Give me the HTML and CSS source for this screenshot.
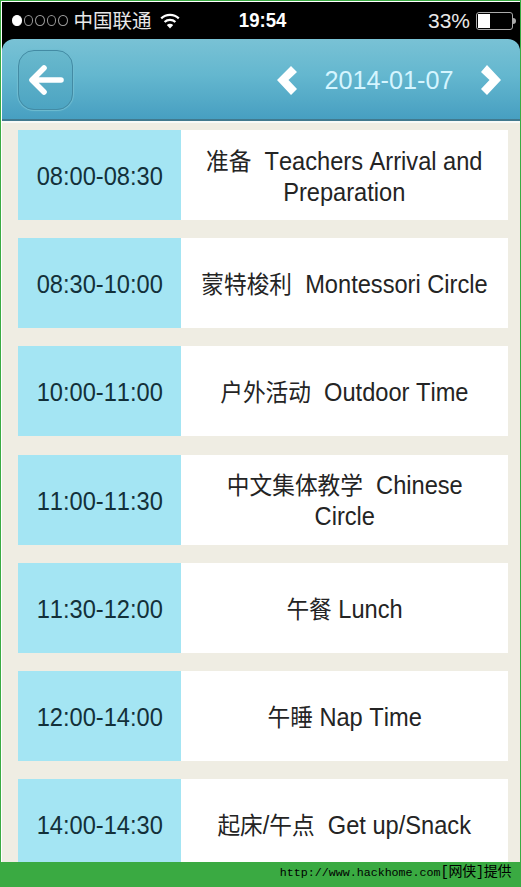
FILE: index.html
```html
<!DOCTYPE html>
<html lang="zh-CN">
<head>
    <meta charset="UTF-8">
    <meta name="viewport" content="width=device-width, initial-scale=1.0">
    <link rel="stylesheet" href="styles.css">
    <title>Schedule</title>
</head>
<body>
    <div class="wrapper">
        <div class="phone">
            <div class="status">
                <div class="status-left">
                    <div class="signal"><i class="full"></i><i></i><i></i><i></i><i></i></div>
                    <span class="carrier">中国联通</span>
                    <svg class="wifi" width="20" height="16" viewBox="0 0 20 16">
                        <path d="M1.2 5.4a12.6 12.6 0 0 1 17.6 0M4.6 9a7.8 7.8 0 0 1 10.8 0" fill="none" stroke="#fff" stroke-width="2.2"/>
                        <path d="M10 15.4l-3.2-3.4a5 5 0 0 1 6.4 0z" fill="#fff"/>
                    </svg>
                </div>
                <span class="clock">19:54</span>
                <div class="status-right">
                    <span class="percent">33%</span>
                    <div class="battery"><div class="level"></div></div>
                    <div class="battery-tip"></div>
                </div>
            </div>
            <div class="header-back">
                <div class="header">
                    <button class="back">
                        <svg width="36" height="32" viewBox="0 0 36 32">
                            <path d="M16 4L4 16l12 12M4.500 16H33" fill="none" stroke="#fff" stroke-width="5.600" stroke-linecap="round" stroke-linejoin="round"/>
                        </svg>
                    </button>
                    <div class="dates">
                        <svg width="20" height="30" viewBox="0 0 20 30">
                            <path d="M14 1l6 6-8.500 8 8.500 9-6 6L0 15z" fill="#fff"/>
                        </svg>
                        <span class="date">2014-01-07</span>
                        <svg width="20" height="30" viewBox="0 0 20 30">
                            <path d="M6 0L20 15 6 30l-6-6 8.500-9L0 7z" fill="#fff"/>
                        </svg>
                    </div>
                </div>
            </div>
            <div class="list">
                <div class="item">
                    <div class="time"><span>08:00-08:30</span></div>
                    <div class="name"><span><b>准备</b>&nbsp; Teachers Arrival and<br>Preparation</span></div>
                </div>
                <div class="item">
                    <div class="time"><span>08:30-10:00</span></div>
                    <div class="name"><span><b>蒙特梭利</b>&nbsp; Montessori Circle</span></div>
                </div>
                <div class="item">
                    <div class="time"><span>10:00-11:00</span></div>
                    <div class="name"><span><b>户外活动</b>&nbsp; Outdoor Time</span></div>
                </div>
                <div class="item">
                    <div class="time"><span>11:00-11:30</span></div>
                    <div class="name"><span><b>中文集体教学</b>&nbsp; Chinese<br>Circle</span></div>
                </div>
                <div class="item">
                    <div class="time"><span>11:30-12:00</span></div>
                    <div class="name"><span><b>午餐</b> Lunch</span></div>
                </div>
                <div class="item">
                    <div class="time"><span>12:00-14:00</span></div>
                    <div class="name"><span><b>午睡</b> Nap Time</span></div>
                </div>
                <div class="item">
                    <div class="time"><span>14:00-14:30</span></div>
                    <div class="name"><span><b>起床</b>/<b>午点</b>&nbsp; Get up/Snack</span></div>
                </div>
            </div>
        </div>
        <div class="footer">http://www.hackhome.com<span>[网侠]提供</span></div>
    </div>
</body>
</html>
```
FILE: styles.css
```css
*{
    margin: 0;
    padding: 0;
    box-sizing: border-box;
}
body{
    font-family: "Liberation Sans", "Noto Sans CJK SC", sans-serif;
    font-kerning: none;
    background: #3aaa42;
}
.wrapper{
    height: 887px;
    display: flex;
    flex-direction: column;
    padding: 1px 1px 0;
    overflow: hidden;
}
.phone{
    height: 861px;
    display: flex;
    flex-direction: column;
    border-top: 1px solid #fff;
    border-left: 1px solid #fff;
    background: #efede3;
    overflow: hidden;
}

.status{
    height: 37px;
    flex-shrink: 0;
    display: grid;
    grid-template-columns: 1fr auto 1fr;
    align-items: center;
    padding: 0 4px 0 10px;
    background: #000;
    color: #e8e8e8;
}
.status-left, .status-right, .signal{
    display: flex;
    align-items: center;
}
.signal{
    gap: 2px;
}
.signal i{
    width: 9.500px;
    height: 11px;
    border: 1px solid #999;
    border-radius: 50%;
}
.signal .full{
    background: #fff;
    border-color: #fff;
}
.carrier{
    margin: 0 8px 0 6px;
    font-size: 19.500px;
    line-height: 30px;
}
.clock{
    margin-right: 3px;
    font-size: 20px;
    font-weight: bold;
    color: #fff;
    transform: scaleX(.93);
}
.status-right{
    justify-content: flex-end;
}
.percent{
    margin-right: 6px;
    font-size: 21px;
}
.battery{
    width: 37px;
    height: 18px;
    padding: 1px;
    border: 1px solid #aaa;
    border-radius: 3px;
}
.level{
    width: 12px;
    height: 14px;
    background: #fff;
}
.battery-tip{
    width: 3px;
    height: 6px;
    background: #aaa;
    border-radius: 0 3px 3px 0;
}

.header-back{
    flex-shrink: 0;
    background: #000;
}
.header{
    height: 82px;
    display: flex;
    align-items: center;
    justify-content: space-between;
    padding: 1px 19px 0 16px;
    border-bottom: 2px solid #41798e;
    border-radius: 12px 12px 0 0;
    background: linear-gradient(#79c2d5, #64b7cf 45%, #479fc1);
}
.back{
    width: 55px;
    height: 60px;
    display: flex;
    align-items: center;
    justify-content: center;
    border: 1px solid #438ba4;
    border-radius: 16px;
    background: linear-gradient(#69b9cd, #4ca4c2);
    box-shadow: 0 0 1px 1px #70bdd1;
}
.dates{
    display: flex;
    align-items: center;
}
.date{
    width: 150px;
    margin: 2px 17px 0;
    text-align: center;
    font-size: 26px;
    color: #d5f5ff;
    transform: scaleX(.97);
}

.list{
    flex: 1;
    display: flex;
    flex-direction: column;
    gap: 18.200px;
    padding: 7px 12px 0 16px;
    border-top: 2px solid #f8faf7;
}
.item{
    height: 90px;
    flex-shrink: 0;
    display: flex;
}
.time, .name{
    display: flex;
    align-items: center;
    justify-content: center;
    font-size: 25px;
    line-height: 31px;
    white-space: nowrap;
    text-align: center;
}
.time{
    width: 163px;
    padding-top: 3px;
    background: #a4e5f3;
    color: #133039;
}
.name{
    flex: 1;
    padding-top: 3px;
    background: #fff;
    color: #242424;
}
/* narrow the glyphs a little */
.time span, .name span{
    transform: scaleX(.945);
}
.name b{
    font-size: 24px;
    font-weight: normal;
    line-height: 1;
}

.footer{
    height: 25px;
    padding-right: 9px;
    text-align: right;
    font-family: "Liberation Mono", "Noto Sans CJK SC", monospace;
    font-size: 11.670px;
    line-height: 20px;
    color: #000;
}
.footer span{
    font-size: 14px;
    letter-spacing: -.4px;
}
```
